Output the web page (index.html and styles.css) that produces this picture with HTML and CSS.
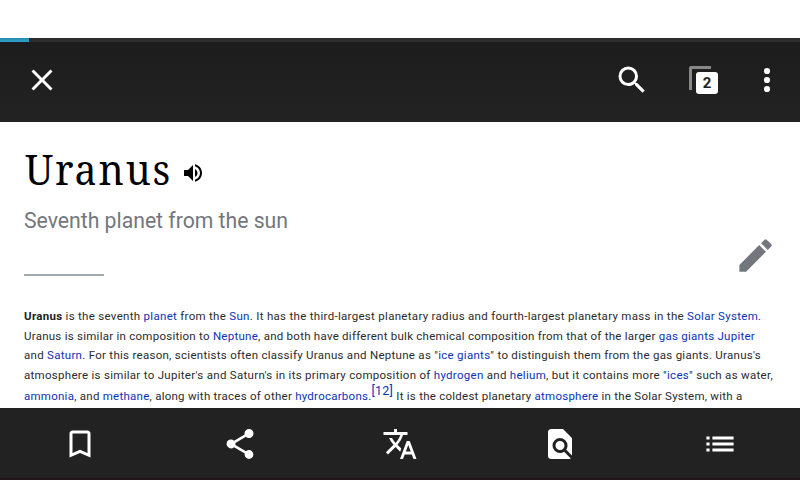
FILE: index.html
```html
<!DOCTYPE html>
<html lang="en">
<head>
<meta charset="utf-8">
<title>Uranus</title>
<link rel="stylesheet" href="styles.css">
</head>
<body>
<div class="status"></div>
<header class="toolbar">
  <div class="progress"><div class="progress-value"></div></div>
  <div class="actions">
    <svg class="icon close" viewBox="0 0 24 24"><path d="M19 6.41L17.59 5 12 10.59 6.41 5 5 6.41 10.59 12 5 17.59 6.41 19 12 13.41 17.59 19 19 17.59 13.41 12z"/></svg>
    <svg class="icon search" viewBox="0 0 24 24"><path d="M15.5 14h-.79l-.28-.27A6.47 6.47 0 0 0 16 9.5 6.5 6.5 0 1 0 9.5 16c1.61 0 3.09-.59 4.23-1.57l.27.28v.79l5 4.99L20.49 19l-4.99-5zm-6 0a4.5 4.5 0 1 1 0-9 4.5 4.5 0 0 1 0 9z"/></svg>
    <div class="tabs"><span class="tab-count">2</span></div>
    <svg class="icon more" viewBox="0 0 24 24"><circle cx="12" cy="6" r="2.05"/><circle cx="12" cy="12" r="2.05"/><circle cx="12" cy="18" r="2.05"/></svg>
  </div>
</header>
<main class="article">
  <div class="title-row">
    <h1>Uranus</h1>
    <svg class="speaker" viewBox="0 0 24 24"><path d="M3 9v6h4l5 5V4L7 9H3zm13.5 3c0-1.77-1.02-3.29-2.5-4.03v8.05c1.48-.73 2.5-2.25 2.5-4.02zM14 3.23v2.06c2.89.86 5 3.54 5 6.71s-2.11 5.85-5 6.71v2.06c4.01-.91 7-4.49 7-8.77s-2.99-7.86-7-8.77z"/></svg>
  </div>
  <p class="description">Seventh planet from the sun</p>
  <div class="divider-row">
    <div class="divider"></div>
    <svg class="edit" viewBox="0 0 24 24"><path d="M3 17.25V21h3.75L17.81 9.94l-3.75-3.75L3 17.25zM20.71 7.04a1 1 0 0 0 0-1.41l-2.34-2.34a1 1 0 0 0-1.41 0l-1.83 1.83 3.75 3.75 1.83-1.83z"/></svg>
  </div>
  <div class="text">
    <div class="line l1"><b>Uranus</b> is the seventh <a>planet</a> from the <a>Sun</a>. It has the third-largest planetary radius and fourth-largest planetary mass in the <a>Solar System</a>.</div>
    <div class="line l2">Uranus is similar in composition to <a>Neptune</a>, and both have different bulk chemical composition from that of the larger <a>gas giants</a> <a>Jupiter</a></div>
    <div class="line l3">and <a>Saturn</a>. For this reason, scientists often classify Uranus and Neptune as "<a>ice giants</a>" to distinguish them from the gas giants. Uranus's</div>
    <div class="line l4">atmosphere is similar to Jupiter's and Saturn's in its primary composition of <a>hydrogen</a> and <a>helium</a>, but it contains more "<a>ices</a>" such as water,</div>
    <div class="line l5"><a>ammonia</a>, and <a>methane</a>, along with traces of other <a>hydrocarbons</a>.<a class="ref">[12]</a> It is the coldest planetary <a>atmosphere</a> in the Solar System, with a</div>
  </div>
</main>
<nav class="bottom">
  <div class="item"><svg class="icon" viewBox="0 0 24 24"><path d="M17 3H7c-1.1 0-2 .9-2 2v16l7-3 7 3V5c0-1.1-.9-2-2-2zm0 15l-5-2.18L7 18V5h10v13z"/></svg></div>
  <div class="item"><svg class="icon" viewBox="0 0 24 24"><path d="M18 16.08c-.76 0-1.44.3-1.96.77L8.91 12.7c.05-.23.09-.46.09-.7s-.04-.47-.09-.7l7.05-4.11c.54.5 1.25.81 2.04.81a3 3 0 1 0-3-3c0 .24.04.47.09.7L8.04 9.81A2.99 2.99 0 0 0 3 12a3 3 0 0 0 5.04 2.19l7.12 4.16c-.05.21-.08.43-.08.65A2.92 2.92 0 1 0 18 16.08z"/></svg></div>
  <div class="item"><svg class="icon" viewBox="0 0 24 24"><path d="M12.87 15.07l-2.54-2.51.03-.03A17.52 17.52 0 0 0 14.07 6H17V4h-7V2H8v2H1v1.99h11.17C11.5 7.92 10.44 9.75 9 11.35 8.07 10.32 7.3 9.19 6.69 8h-2c.73 1.63 1.73 3.17 2.98 4.56l-5.09 5.02L4 19l5-5 3.11 3.11.76-2.04zM18.5 10h-2L12 22h2l1.12-3h4.75L21 22h2l-4.5-12zm-2.62 7l1.62-4.33L19.12 17h-3.24z"/></svg></div>
  <div class="item"><svg class="icon" viewBox="0 0 24 24"><path d="M20 19.59V8l-6-6H6c-1.1 0-1.99.9-1.99 2L4 20c0 1.1.89 2 1.99 2H18c.45 0 .85-.15 1.19-.4l-4.43-4.43c-.8.52-1.74.83-2.76.83a5 5 0 1 1 5-5c0 1.02-.31 1.96-.83 2.75L20 19.59zM9 13a3 3 0 1 0 6 0 3 3 0 0 0-6 0z"/></svg></div>
  <div class="item"><svg class="list" viewBox="0 0 28 16"><path d="M.4.5h3.2v3H.4zM6.4.5h21.2v3H6.4zM.4 6.5h3.2v3H.4zM6.4 6.5h21.2v3H6.4zM.4 12.5h3.2v3H.4zM6.4 12.5h21.2v3H6.4z"/></svg></div>
</nav>
</body>
</html>
```
FILE: styles.css
```css
* { box-sizing: border-box; }
body {
  margin: 0;
  width: 800px;
  height: 480px;
  overflow: hidden;
  display: flex;
  flex-direction: column;
  background: #fff;
  color: #222;
  font-family: Roboto, sans-serif;
}
svg { display: block; fill: #fff; flex: none; }
.icon { width: 36px; height: 36px; }

.status { height: 38px; flex: none; }
.toolbar {
  height: 84px;
  flex: none;
  background: linear-gradient(#1c1c1c, #232323);
}
.progress { height: 4px; background: #2d2d2d; }
.progress-value { width: 29px; height: 4px; background: linear-gradient(#2789b0, #2fa4d0); }
.actions { display: flex; align-items: center; height: 76px; padding: 0 15px 0 24px; }
.search { margin-left: auto; margin-right: 40px; }
.tabs {
  width: 29px;
  height: 28px;
  margin-right: 31px;
  margin-left: -1px;
  padding: 6px 0 0 7px;
  background:
    linear-gradient(#888, #888) 0 0 / 22px 3px no-repeat,
    linear-gradient(#888, #888) 0 0 / 3px 24px no-repeat;
  border-radius: 2px;
}
.tab-count {
  display: block;
  width: 22px;
  height: 22px;
  border-radius: 3px;
  background: #fff;
  box-shadow: 0 0 0 1px #1f1f1f;
  color: #222;
  font: bold 15px/22px Roboto, sans-serif;
  text-align: center;
}

.article { flex: 1; min-height: 0; overflow: hidden; padding: 24px 24px 0; }
.title-row { display: flex; height: 54px; align-items: center; gap: 10px; }
h1 {
  margin: -8px 0 0;
  padding-left: 1px;
  width: 147px;
  font: 400 42px/54px "Noto Serif", "Droid Serif", "DejaVu Serif", serif;
  letter-spacing: 2px;
  transform: scaleX(.935);
  transform-origin: 0 0;
  color: #000;
  white-space: nowrap;
}
.speaker { width: 24px; height: 24px; fill: #000; }
.description { margin: 6px 0 0; font-size: 21.2px; line-height: 30px; color: #72777d; }
.divider-row { display: flex; justify-content: space-between; height: 42px; }
.divider { width: 80px; height: 2px; margin-top: 38px; background: #a2a9b1; }
.edit { width: 43px; height: 43px; margin: -2.5px -.5px 0 0; fill: #72777d; }
.text { margin-top: 28px; font-size: 11.5px; line-height: 20px; color: #2b2b2b; }
.line { height: 20px; white-space: pre; }
.line a { color: #0c33b8; }
.line b { color: #222; }
.l1 { letter-spacing: .303px; }
.l2 { letter-spacing: .257px; height: 19px; }
.l3 { letter-spacing: .282px; }
.l4 { letter-spacing: .294px; height: 21px; }
.l5 { letter-spacing: .253px; }
.ref { position: relative; top: -5px; font-size: 12.5px; }

.bottom { display: flex; height: 72px; flex: none; background: #222; border-bottom: 2px solid #1e1619; }
.item { flex: 1; display: flex; justify-content: center; padding-top: 18px; }
.list { width: 28px; height: 16px; margin-top: 10px; }
```
